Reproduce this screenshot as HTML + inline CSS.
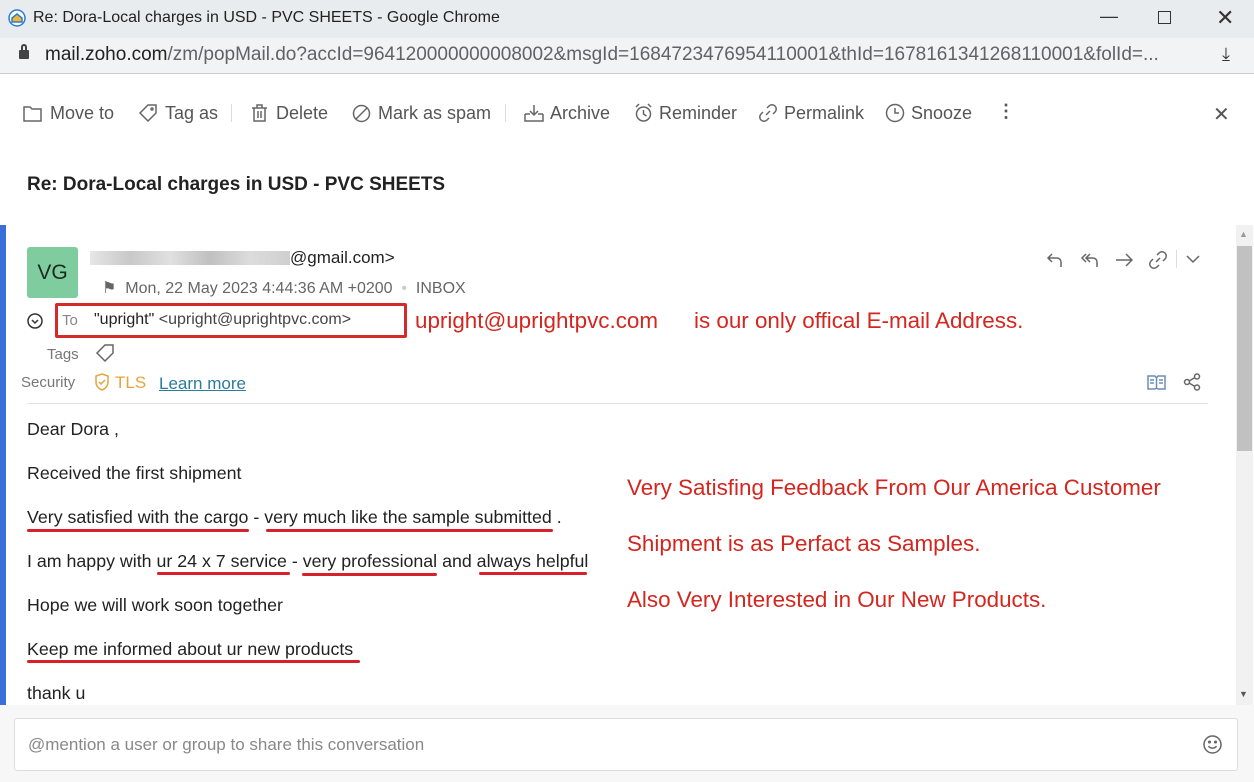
<!DOCTYPE html>
<html><head><meta charset="utf-8"><style>
*{margin:0;padding:0;box-sizing:border-box}
body{width:1254px;height:782px;overflow:hidden;background:#fff;font-family:"Liberation Sans",sans-serif;position:relative;color:#222}
.a{position:absolute;white-space:nowrap}
.tb{font-size:18px;color:#555}
.red{color:#d4261f;font-size:22.4px}
.u{position:absolute;height:3px;background:#d8202a;border-radius:2px}
.body{font-size:17.8px;color:#222}
svg{position:absolute;fill:none;stroke:#666;stroke-width:1.5}
</style></head><body>
<div class="a" style="left:0;top:0;width:1254px;height:38px;background:#e9ecef"></div>
<svg style="left:8px;top:9px" width="18" height="18" viewBox="0 0 18 18"><circle cx="9" cy="9" r="8" fill="#fff" stroke="#2a7bd6" stroke-width="1.5"/><path d="M4 9l5-4 5 4v4H4z" fill="#f2b531" stroke="#2a7bd6"/></svg>
<div class="a" style="left:33px;top:9px;font-size:16px;color:#222">Re: Dora-Local charges in USD - PVC SHEETS - Google Chrome</div>
<div class="a" style="left:1100px;top:6px;font-size:18px;color:#333">—</div>
<div class="a" style="left:1158px;top:11px;width:13px;height:13px;border:1.5px solid #333"></div>
<div class="a" style="left:1216px;top:5px;font-size:22px;color:#333">✕</div>
<div class="a" style="left:0;top:38px;width:1254px;height:36px;background:#f1f3f4;border-bottom:1px solid #ccc"></div>
<div class="a" style="left:19px;top:50px;width:10px;height:9px;background:#444;border-radius:1px"></div>
<div class="a" style="left:21px;top:44px;width:6px;height:8px;border:2px solid #444;border-bottom:none;border-radius:3px 3px 0 0"></div>
<div class="a" style="left:45px;top:44px;font-size:19px;color:#222">mail.zoho.com<span style="color:#5f6368">/zm/popMail.do?accId=964120000000008002&amp;msgId=1684723476954110001&amp;thId=1678161341268110001&amp;folId=...</span></div>
<div class="a" style="left:1222px;top:44px;font-size:18px;color:#333">⤓</div>
<!-- toolbar -->
<svg style="left:23px;top:104px" width="19" height="18" viewBox="0 0 19 18"><path d="M1 3h6l2 2h9v12H1z"/></svg>
<div class="a tb" style="left:50px;top:103px">Move to</div>
<svg style="left:138px;top:104px" width="20" height="18" viewBox="0 0 20 18"><path d="M10 1h8v8l-8 8-8-8z"/><circle cx="14" cy="5" r="1"/></svg>
<div class="a tb" style="left:165px;top:103px">Tag as</div>
<div class="a" style="left:231px;top:104px;width:1px;height:18px;background:#ddd"></div>
<svg style="left:251px;top:104px" width="17" height="18" viewBox="0 0 17 18"><path d="M1 4h15M6 4V1h5v3M3 4v13h11V4M7 7v7M10 7v7"/></svg>
<div class="a tb" style="left:276px;top:103px">Delete</div>
<svg style="left:352px;top:104px" width="19" height="19" viewBox="0 0 19 19"><circle cx="9.5" cy="9.5" r="8"/><path d="M4 15L15 4"/></svg>
<div class="a tb" style="left:378px;top:103px">Mark as spam</div>
<div class="a" style="left:505px;top:104px;width:1px;height:18px;background:#ddd"></div>
<svg style="left:524px;top:104px" width="20" height="18" viewBox="0 0 20 18"><path d="M1 10v7h18v-7M10 1v10M6 7l4 4 4-4M1 10h5M14 10h5"/></svg>
<div class="a tb" style="left:550px;top:103px">Archive</div>
<svg style="left:634px;top:103px" width="19" height="20" viewBox="0 0 19 20"><circle cx="9.5" cy="11" r="7"/><path d="M9.5 7v4l3 2M2 4l3-3M17 4l-3-3"/></svg>
<div class="a tb" style="left:659px;top:103px">Reminder</div>
<svg style="left:758px;top:103px" width="20" height="20" viewBox="0 0 20 20"><path d="M8 12l4-4M9 5l2-2a4 4 0 016 6l-2 2M11 15l-2 2a4 4 0 01-6-6l2-2"/></svg>
<div class="a tb" style="left:784px;top:103px">Permalink</div>
<svg style="left:885px;top:103px" width="20" height="20" viewBox="0 0 20 20"><circle cx="10" cy="10" r="8.5"/><path d="M10 5v5h4"/></svg>
<div class="a tb" style="left:911px;top:103px">Snooze</div>
<div class="a tb" style="left:997px;top:101px;font-weight:bold">⋮</div>
<div class="a" style="left:1213px;top:102px;font-size:20px;color:#555">✕</div>
<div class="a" style="left:27px;top:174px;font-size:19px;font-weight:bold;color:#222">Re: Dora-Local charges in USD - PVC SHEETS</div>
<div class="a" style="left:0;top:225px;width:6px;height:485px;background:#3a6fd8"></div>
<div class="a" style="left:1236px;top:225px;width:17px;height:480px;background:#f1f1f1"></div>
<div class="a" style="left:1237px;top:246px;width:15px;height:205px;background:#c1c1c1"></div>
<div class="a" style="left:1239px;top:229px;font-size:9px;color:#999">▲</div>
<div class="a" style="left:1239px;top:689px;font-size:9px;color:#555">▼</div>
<div class="a" style="left:27px;top:247px;width:51px;height:51px;background:#7fcc9e;border-radius:3px;font-size:21px;text-align:center;line-height:51px;color:#1d2a22">VG</div>
<div class="a" style="left:90px;top:251px;width:200px;height:14px;background:linear-gradient(90deg,#e6e6e6,#c8c8c8,#e0e0e0,#c0c0c0,#dcdcdc,#cfcfcf)"></div>
<div class="a" style="left:290px;top:248px;font-size:17px;color:#222">@gmail.com&gt;</div>
<div class="a" style="left:102px;top:278px;font-size:16px;color:#666">⚑ &nbsp;Mon, 22 May 2023 4:44:36 AM +0200 &nbsp;<span style="color:#ccc">•</span>&nbsp; INBOX</div>
<svg style="left:27px;top:313px" width="16" height="16" viewBox="0 0 16 16"><circle cx="8" cy="8" r="7" stroke="#333"/><path d="M5 7l3 3 3-3" stroke="#333"/></svg>
<div class="a" style="left:55px;top:303px;width:352px;height:35px;border:3px solid #d42a2a;border-radius:2px"></div>
<div class="a" style="left:62px;top:312px;font-size:15px;color:#888">To</div>
<div class="a" style="left:94px;top:311px;font-size:16px;color:#222">"upright" <span style="color:#444">&lt;upright@uprightpvc.com&gt;</span></div>
<div class="a red" style="left:415px;top:308px">upright@uprightpvc.com</div>
<div class="a red" style="left:694px;top:308px">is our only offical E-mail Address.</div>
<div class="a" style="left:47px;top:346px;font-size:15px;color:#777">Tags</div>
<svg style="left:95px;top:344px" width="20" height="18" viewBox="0 0 20 18"><path d="M10 1h8v8l-8 8-8-8z"/></svg>
<div class="a" style="left:21px;top:374px;font-size:15px;color:#777">Security</div>
<svg style="left:94px;top:373px" width="16" height="18" viewBox="0 0 16 18"><path d="M8 1l6 2v6c0 4-3 7-6 8-3-1-6-4-6-8V3z" stroke="#e8a33d"/><path d="M5 9l2 2 4-4" stroke="#e8a33d"/></svg>
<div class="a" style="left:115px;top:373px;font-size:17px;color:#e8a33d">TLS</div>
<div class="a" style="left:159px;top:374px;font-size:17px;color:#2a7c9a;text-decoration:underline">Learn more</div>
<svg style="left:1046px;top:251px" width="18" height="18" viewBox="0 0 18 18"><path d="M6 3L2 7l4 4M2 7h9a4 4 0 014 4v5"/></svg>
<svg style="left:1080px;top:251px" width="20" height="18" viewBox="0 0 20 18"><path d="M6 3L2 7l4 4M10 3L6 7l4 4M6 7h7a4 4 0 014 4v5"/></svg>
<svg style="left:1115px;top:251px" width="18" height="18" viewBox="0 0 18 18"><path d="M1 9h16M11 3l6 6-6 6"/></svg>
<svg style="left:1148px;top:250px" width="20" height="20" viewBox="0 0 20 20"><path d="M8 12l4-4M9 5l2-2a4 4 0 016 6l-2 2M11 15l-2 2a4 4 0 01-6-6l2-2"/></svg>
<div class="a" style="left:1176px;top:250px;width:1px;height:18px;background:#ddd"></div>
<svg style="left:1186px;top:255px" width="14" height="9" viewBox="0 0 14 9"><path d="M1 1l6 6 6-6"/></svg>
<svg style="left:1147px;top:375px" width="19" height="15" viewBox="0 0 19 15"><path d="M1 1h7l1.5 2L11 1h7v13h-7l-1.5-1L8 14H1zM9.5 3v10M3 5h4M3 8h4M12 5h4M12 8h4" stroke="#6d8bb5"/></svg>
<svg style="left:1183px;top:373px" width="18" height="18" viewBox="0 0 18 18"><circle cx="4" cy="9" r="2.5"/><circle cx="14" cy="3.5" r="2.5"/><circle cx="14" cy="14.5" r="2.5"/><path d="M6 8l6-3.5M6 10l6 3.5"/></svg>
<div class="a" style="left:27px;top:403px;width:1181px;height:1px;background:#e4e4e4"></div>
<div class="a body" style="left:27px;top:419px">Dear Dora ,</div>
<div class="a body" style="left:27px;top:463px">Received the first shipment</div>
<div class="a body" style="left:27px;top:507px">Very satisfied with the cargo - very much like the sample submitted .</div>
<div class="a body" style="left:27px;top:551px">I am happy with ur 24 x 7 service - very professional and always helpful</div>
<div class="a body" style="left:27px;top:595px">Hope we will work soon together</div>
<div class="a body" style="left:27px;top:639px">Keep me informed about ur new products</div>
<div class="a body" style="left:27px;top:683px">thank u</div>
<div class="u" style="left:27px;top:529px;width:222px"></div>
<div class="u" style="left:266px;top:529px;width:287px"></div>
<div class="u" style="left:157px;top:572px;width:133px"></div>
<div class="u" style="left:302px;top:573px;width:135px"></div>
<div class="u" style="left:479px;top:572px;width:108px"></div>
<div class="u" style="left:27px;top:660px;width:333px"></div>
<div class="a red" style="left:627px;top:475px">Very Satisfing Feedback From Our America Customer</div>
<div class="a red" style="left:627px;top:531px">Shipment is as Perfact as Samples.</div>
<div class="a red" style="left:627px;top:587px">Also Very Interested in Our New Products.</div>
<div class="a" style="left:0;top:705px;width:1254px;height:77px;background:#f7f7f7"></div>
<div class="a" style="left:14px;top:718px;width:1224px;height:53px;background:#fff;border:1px solid #ddd;border-radius:3px"></div>
<div class="a" style="left:28px;top:735px;font-size:17px;color:#888">@mention a user or group to share this conversation</div>
<svg style="left:1203px;top:735px" width="19" height="19" viewBox="0 0 19 19"><circle cx="9.5" cy="9.5" r="8.5"/><path d="M5.5 11a4.5 4 0 008 0"/><circle cx="6.5" cy="7" r=".8"/><circle cx="12.5" cy="7" r=".8"/></svg>
</body></html>
